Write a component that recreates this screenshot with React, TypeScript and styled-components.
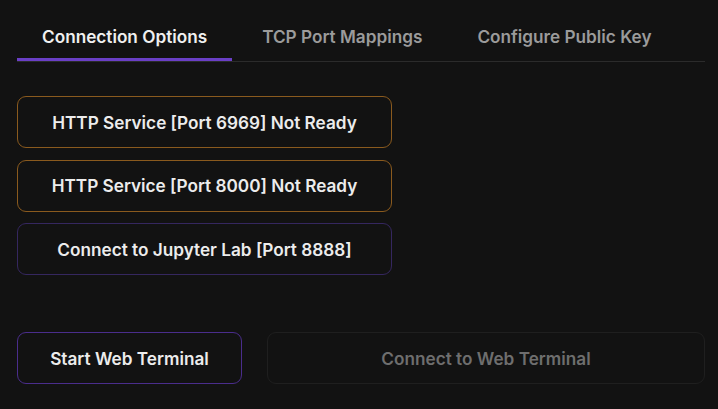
import React, { useState } from "react";
import styled, { createGlobalStyle } from "styled-components";

const GlobalStyle = createGlobalStyle`
  html, body {
    margin: 0;
    padding: 0;
    background: #121212;
  }
  body {
    font-family: Inter, "Noto Sans", "Liberation Sans", sans-serif;
    -webkit-font-smoothing: antialiased;
  }
`;

const Page = styled.div`
  width: 718px;
  height: 409px;
  box-sizing: border-box;
  padding: 15px 13px 0 17px;
  background: #121212;
  display: flex;
  flex-direction: column;
`;

const TabList = styled.div`
  display: flex;
  gap: 5px;
  border-bottom: 1px solid #2b2b2b;
`;

const Tab = styled.button<{ $active?: boolean }>`
  height: 46px;
  box-sizing: border-box;
  padding: 0 25px;
  background: transparent;
  border: none;
  border-bottom: 3px solid ${(p) => (p.$active ? "#6a3fc6" : "transparent")};
  color: ${(p) => (p.$active ? "#f0f0f0" : "#9b9b9b")};
  font-family: inherit;
  font-size: 17.2px;
  font-weight: 600;
  cursor: pointer;
  white-space: nowrap;
`;

const ServiceStack = styled.div`
  display: flex;
  flex-direction: column;
  gap: 11.5px;
  margin-top: 34px;
  width: 375px;
`;

type Tone = "warn" | "purple" | "accent" | "disabled";

const borderFor: Record<Tone, string> = {
  warn: "#8a5a1e",
  purple: "#35275f",
  accent: "#4a2d8c",
  disabled: "#1f1f1f",
};

const ActionButton = styled.button<{ $tone: Tone }>`
  height: 52px;
  box-sizing: border-box;
  border-radius: 9px;
  border: 1px solid ${(p) => borderFor[p.$tone]};
  background: #121212;
  color: ${(p) => (p.$tone === "disabled" ? "#6e6e6e" : "#ececec")};
  font-family: inherit;
  font-size: 17.2px;
  font-weight: 600;
  display: flex;
  align-items: center;
  justify-content: center;
  cursor: ${(p) => (p.$tone === "disabled" ? "default" : "pointer")};
  white-space: nowrap;
`;

const TerminalRow = styled.div`
  display: flex;
  gap: 25px;
  margin-top: 57px;
`;

const StartButton = styled(ActionButton)`
  width: 225px;
`;

const ConnectButton = styled(ActionButton)`
  flex: 1;
`;

const tabs = ["Connection Options", "TCP Port Mappings", "Configure Public Key"];

const services: { label: string; tone: Tone }[] = [
  { label: "HTTP Service [Port 6969] Not Ready", tone: "warn" },
  { label: "HTTP Service [Port 8000] Not Ready", tone: "warn" },
  { label: "Connect to Jupyter Lab [Port 8888]", tone: "purple" },
];

export default function App() {
  const [active, setActive] = useState(0);
  return (
    <>
      <GlobalStyle />
      <Page>
        <TabList>
          {tabs.map((t, i) => (
            <Tab key={t} $active={i === active} onClick={() => setActive(i)}>
              {t}
            </Tab>
          ))}
        </TabList>
        <ServiceStack>
          {services.map((s) => (
            <ActionButton key={s.label} $tone={s.tone}>
              {s.label}
            </ActionButton>
          ))}
        </ServiceStack>
        <TerminalRow>
          <StartButton $tone="accent">Start Web Terminal</StartButton>
          <ConnectButton $tone="disabled" disabled>
            Connect to Web Terminal
          </ConnectButton>
        </TerminalRow>
      </Page>
    </>
  );
}
